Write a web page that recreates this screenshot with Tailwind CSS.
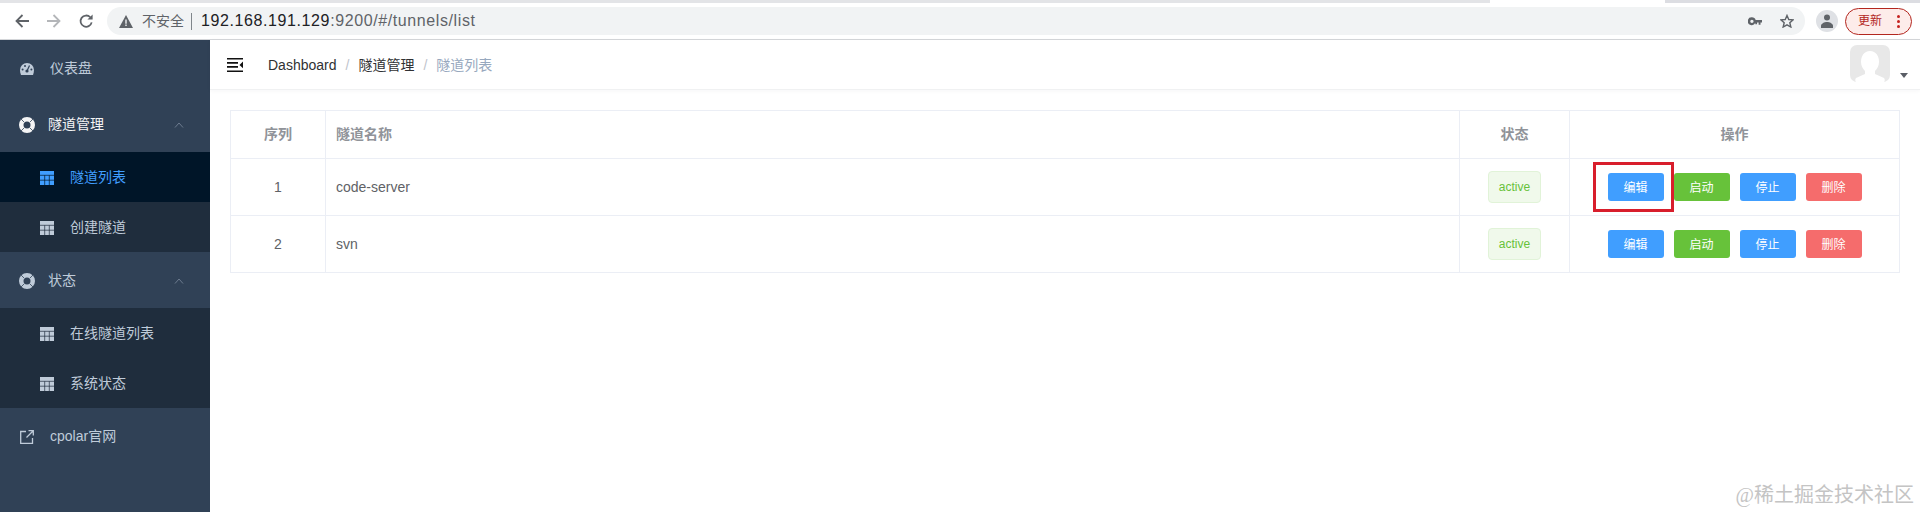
<!DOCTYPE html>
<html lang="zh-CN">
<head>
  <meta charset="UTF-8" />
  <title>隧道列表</title>
  <script src="https://cdn.jsdelivr.net/npm/@tailwindcss/browser@4"></script>
</head>
<body class="relative h-[512px] overflow-hidden bg-white font-['Liberation_Sans','Noto_Sans_CJK_SC',sans-serif] text-[14px] text-[#606266]">

  <!-- browser toolbar -->
  <div class="h-[40px] border-b border-[#d4d6d9] bg-white">
    <div class="flex h-[3px]">
      <div class="w-[1490px] bg-[#e3e4e7]"></div>
      <div class="w-[175px] bg-white"></div>
      <div class="flex-1 bg-[#dcdde2]"></div>
    </div>
    <div class="flex h-[36px] items-center">
      <div class="flex w-[107px] items-center gap-[18px] pl-[15px]">
        <svg class="h-[16px] w-[14px]" viewBox="0 0 14 16" fill="none" stroke="#5f6368" stroke-width="1.8"><path d="M14 8H1.500M7.500 2 1.500 8l6 6"/></svg>
        <svg class="h-[16px] w-[14px]" viewBox="0 0 14 16" fill="none" stroke="#b4b6b9" stroke-width="1.8"><path d="M0 8h12.500M6.500 2l6 6-6 6"/></svg>
        <svg class="h-[16px] w-[15px]" viewBox="0 0 16 16" fill="none" stroke="#5f6368" stroke-width="1.9"><path d="M13.500 9.500A6 6 0 1 1 12 4"/><path d="M14.500 1v5.500H9z" fill="#5f6368" stroke="none"/></svg>
      </div>
      <div class="flex h-[28px] w-[1698px] items-center rounded-full bg-[#f1f3f4] pl-[12px] pr-[11px]">
        <svg class="h-[13px] w-[14px]" viewBox="0 0 14 13"><path d="M7 0 14 13H0z" fill="#5f6368"/><path d="M6.300 4.500h1.400v4.200H6.300zM6.300 9.600h1.400v1.400H6.300z" fill="#f1f3f4"/></svg>
        <span class="ml-[9px] text-[14px] text-[#5f6368]">不安全</span>
        <span class="ml-[7px] h-[17px] w-px bg-[#80868b]"></span>
        <span class="ml-[9px] text-[16px] tracking-[0.6px] text-[#202124]">192.168.191.129<span class="text-[#5f6368]">:9200/#/tunnels/list</span></span>
        <svg class="ml-auto h-[9px] w-[14px]" viewBox="0 0 15 9"><path d="M4.200 0a4.200 4.200 0 0 1 4 3H15v2.600h-1.600V8h-2V5.600H9.700V7.500h-1.900V5.800A4.200 4.200 0 1 1 4.200 0zm0 2.500a1.800 1.800 0 1 0 0 3.600 1.800 1.800 0 0 0 0-3.600z" fill="#5f6368"/></svg>
        <svg class="ml-[18px] h-[14px] w-[14px]" viewBox="0 0 24 23" fill="none" stroke="#5f6368" stroke-width="2.400"><path d="m12 2 3 7 7.500.6-5.700 4.900 1.800 7.300L12 18l-6.600 3.800 1.800-7.300L1.500 9.600 9 9z"/></svg>
      </div>
      <div class="ml-[11px] flex h-[22px] w-[22px] items-center justify-center rounded-full bg-[#dfe1e5]">
        <svg class="h-[14px] w-[14px]" viewBox="0 0 14 14" fill="#5f6368"><circle cx="7" cy="3.500" r="3"/><path d="M1 14v-2c0-2.500 3.500-4 6-4s6 1.500 6 4v2z"/></svg>
      </div>
      <div class="ml-[7px] flex h-[27px] w-[67px] items-center rounded-full border border-[#b3261e] bg-[#fdecea] pl-[12px] text-[12px] text-[#b3261e]">
        更新
        <span class="ml-[15px] flex flex-col gap-[2px]">
          <i class="block h-[3px] w-[3px] rounded-full bg-[#c5221f]"></i>
          <i class="block h-[3px] w-[3px] rounded-full bg-[#c5221f]"></i>
          <i class="block h-[3px] w-[3px] rounded-full bg-[#c5221f]"></i>
        </span>
      </div>
    </div>
  </div>

  <div class="flex h-[472px]">
    <!-- sidebar -->
    <aside class="w-[210px] shrink-0 bg-[#304156] text-[14px] text-[#bfcbd9]">
      <div class="flex h-[56px] items-center pl-[20px] pt-[1px]">
        <svg class="h-[12px] w-[14px]" viewBox="0 0 14 12" fill="#bfcbd9"><path d="M7 0A7 7 0 0 0 0 7c0 1.800.4 3.400 1 5h12c.6-1.600 1-3.200 1-5a7 7 0 0 0-7-7z"/><circle cx="7" cy="8" r="1.600" fill="#304156"/><path d="M7 8 9.500 2.500" stroke="#304156" stroke-width="1.200"/><circle cx="2.600" cy="6.500" r="1" fill="#304156"/><circle cx="11.400" cy="6.500" r="1" fill="#304156"/><circle cx="5" cy="3" r="1" fill="#304156"/></svg>
        <span class="ml-[16px]">仪表盘</span>
      </div>
      <div class="flex h-[56px] items-center pl-[19px] pr-[26px] pt-[1px] text-[#f4f4f5]">
        <svg class="h-[16px] w-[16px]" viewBox="0 0 16 16"><circle cx="8" cy="8" r="8" fill="#f4f4f5"/><circle cx="8" cy="8" r="3.500" fill="#304156"/><path d="m2 2 3 3M14 2l-3 3M2 14l3-3M14 14l-3-3" stroke="#304156" stroke-width=".8"/></svg>
        <span class="ml-[13px]">隧道管理</span>
        <svg class="ml-auto h-[6px] w-[10px]" viewBox="0 0 10 6" fill="none" stroke="#6d7c8f"><path d="m1 5.500 4-4.500 4 4.500"/></svg>
      </div>
      <div class="flex h-[50px] items-center bg-[#001528] pl-[40px] pt-[1px] text-[#409eff]">
        <svg class="h-[14px] w-[14px]" viewBox="0 0 14 14" fill="#409eff"><path d="M0 0h14v14H0z"/><path d="M0 4.300h14M4.700 4.300V14M9.300 4.300V14M0 9.200h14" stroke="#001528" stroke-width=".7"/></svg>
        <span class="ml-[16px]">隧道列表</span>
      </div>
      <div class="flex h-[50px] items-center bg-[#1f2d3d] pl-[40px] pt-[1px]">
        <svg class="h-[14px] w-[14px]" viewBox="0 0 14 14" fill="#bfcbd9"><path d="M0 0h14v14H0z"/><path d="M0 4.300h14M4.700 4.300V14M9.300 4.300V14M0 9.200h14" stroke="#1f2d3d" stroke-width=".7"/></svg>
        <span class="ml-[16px]">创建隧道</span>
      </div>
      <div class="flex h-[56px] items-center pl-[19px] pr-[26px] pt-[1px]">
        <svg class="h-[16px] w-[16px]" viewBox="0 0 16 16"><circle cx="8" cy="8" r="8" fill="#bfcbd9"/><circle cx="8" cy="8" r="3.500" fill="#304156"/><path d="m2 2 3 3M14 2l-3 3M2 14l3-3M14 14l-3-3" stroke="#304156" stroke-width=".8"/></svg>
        <span class="ml-[13px]">状态</span>
        <svg class="ml-auto h-[6px] w-[10px]" viewBox="0 0 10 6" fill="none" stroke="#6d7c8f"><path d="m1 5.500 4-4.500 4 4.500"/></svg>
      </div>
      <div class="flex h-[50px] items-center bg-[#1f2d3d] pl-[40px] pt-[1px]">
        <svg class="h-[14px] w-[14px]" viewBox="0 0 14 14" fill="#bfcbd9"><path d="M0 0h14v14H0z"/><path d="M0 4.300h14M4.700 4.300V14M9.300 4.300V14M0 9.200h14" stroke="#1f2d3d" stroke-width=".7"/></svg>
        <span class="ml-[16px]">在线隧道列表</span>
      </div>
      <div class="flex h-[50px] items-center bg-[#1f2d3d] pl-[40px] pt-[1px]">
        <svg class="h-[14px] w-[14px]" viewBox="0 0 14 14" fill="#bfcbd9"><path d="M0 0h14v14H0z"/><path d="M0 4.300h14M4.700 4.300V14M9.300 4.300V14M0 9.200h14" stroke="#1f2d3d" stroke-width=".7"/></svg>
        <span class="ml-[16px]">系统状态</span>
      </div>
      <div class="flex h-[56px] items-center pl-[20px] pt-[1px]">
        <svg class="h-[14px] w-[14px]" viewBox="0 0 14 14" fill="none" stroke="#bfcbd9" stroke-width="1.300"><path d="M6 1.500H.7v11.800h11.800V8M8.500.7h4.800v4.800M13 1 6.500 7.500"/></svg>
        <span class="ml-[16px]">cpolar官网</span>
      </div>
    </aside>

    <main class="min-w-0 flex-1">
      <!-- header -->
      <header class="flex h-[50px] items-center border-b border-[#f0f1f2] pl-[17px] shadow-[0_1px_4px_rgba(0,21,41,0.04)]">
        <svg class="h-[14px] w-[16px]" viewBox="0 0 16 14" fill="#111"><path d="M0 0h16v1.400H0zM0 4h11v1.800H0zM0 8h11v1.800H0zM0 12.600h16V14H0zM16 3.500v6.800l-3.500-3.400z"/></svg>
        <nav class="ml-[25px] flex items-center pt-[1px] text-[14px]">
          <span class="text-[#303133]">Dashboard</span>
          <span class="mx-[9px] text-[#c0c4cc]">/</span>
          <span class="text-[#303133]">隧道管理</span>
          <span class="mx-[9px] text-[#c0c4cc]">/</span>
          <span class="text-[#97a8be]">隧道列表</span>
        </nav>
        <div class="mb-[2px] ml-auto mr-[12px] flex items-end">
          <svg class="h-[37px] w-[40px]" viewBox="0 0 40 37"><rect width="40" height="37" rx="7" fill="#e8e8e8"/><path d="M20 6c-6 0-9 5-9 11 0 4 2 7 4 9v3l-9 4c-1 1-1 3 0 4h28c1-1 1-3 0-4l-9-4v-3c2-2 4-5 4-9 0-6-3-11-9-11z" fill="#fff"/></svg>
          <span class="mb-[4px] ml-[10px] h-0 w-0 border-x-[4px] border-t-[5px] border-x-transparent border-t-[#5a5e66]"></span>
        </div>
      </header>

      <!-- table -->
      <div class="pl-[20px] pr-[20px] pt-[20px]">
        <table class="w-[1670px] table-fixed border-collapse border border-[#ebeef5]">
          <colgroup>
            <col class="w-[95px]" />
            <col />
            <col class="w-[110px]" />
            <col class="w-[330px]" />
          </colgroup>
          <thead>
            <tr class="h-[48px] border-b border-[#ebeef5] text-[14px] font-bold text-[#909399]">
              <th class="border-r border-[#ebeef5] font-bold">序列</th>
              <th class="border-r border-[#ebeef5] pl-[10px] text-left font-bold">隧道名称</th>
              <th class="border-r border-[#ebeef5] font-bold">状态</th>
              <th class="font-bold">操作</th>
            </tr>
          </thead>
          <tbody>
            <tr class="h-[57px] border-b border-[#ebeef5]">
              <td class="border-r border-[#ebeef5] text-center">1</td>
              <td class="border-r border-[#ebeef5] pl-[10px]">code-server</td>
              <td class="border-r border-[#ebeef5]">
                <span class="mx-auto flex h-[32px] w-[53px] items-center justify-center rounded-[4px] border border-[#e1f3d8] bg-[#f0f9eb] text-[12px] text-[#67c23a]">active</span>
              </td>
              <td>
                <div class="flex justify-center gap-[10px] text-[12px] text-white">
                  <div class="relative">
                    <button class="block h-[28px] w-[56px] rounded-[3px] bg-[#409eff] pt-[1px]">编辑</button>
                    <div class="absolute left-[-15px] top-[-11px] h-[50px] w-[81px] border-[3px] border-[#d81e2c]"></div>
                  </div>
                  <button class="h-[28px] w-[56px] rounded-[3px] bg-[#67c23a] pt-[1px]">启动</button>
                  <button class="h-[28px] w-[56px] rounded-[3px] bg-[#409eff] pt-[1px]">停止</button>
                  <button class="h-[28px] w-[56px] rounded-[3px] bg-[#f56c6c] pt-[1px]">删除</button>
                </div>
              </td>
            </tr>
            <tr class="h-[57px] border-b border-[#ebeef5]">
              <td class="border-r border-[#ebeef5] text-center">2</td>
              <td class="border-r border-[#ebeef5] pl-[10px]">svn</td>
              <td class="border-r border-[#ebeef5]">
                <span class="mx-auto flex h-[32px] w-[53px] items-center justify-center rounded-[4px] border border-[#e1f3d8] bg-[#f0f9eb] text-[12px] text-[#67c23a]">active</span>
              </td>
              <td>
                <div class="flex justify-center gap-[10px] text-[12px] text-white">
                  <button class="h-[28px] w-[56px] rounded-[3px] bg-[#409eff] pt-[1px]">编辑</button>
                  <button class="h-[28px] w-[56px] rounded-[3px] bg-[#67c23a] pt-[1px]">启动</button>
                  <button class="h-[28px] w-[56px] rounded-[3px] bg-[#409eff] pt-[1px]">停止</button>
                  <button class="h-[28px] w-[56px] rounded-[3px] bg-[#f56c6c] pt-[1px]">删除</button>
                </div>
              </td>
            </tr>
          </tbody>
        </table>
      </div>
    </main>
  </div>

  <!-- watermark -->
  <div class="absolute bottom-[5px] right-[6px] font-['Liberation_Serif','Noto_Sans_CJK_SC',serif] text-[20px] leading-[24px] text-[#c4c4c4]">@稀土掘金技术社区</div>
</body>
</html>
